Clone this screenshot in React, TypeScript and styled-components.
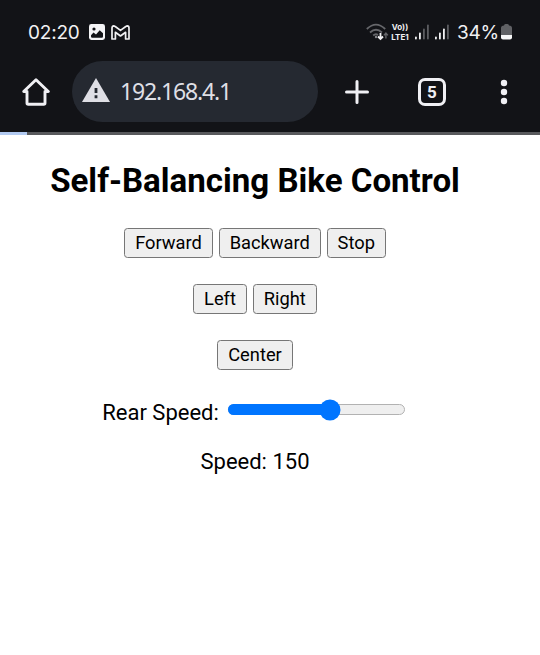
import React from "react";
import styled, { createGlobalStyle } from "styled-components";

const GlobalStyle = createGlobalStyle`
  * { box-sizing: border-box; }
  body { margin: 0; background: #fff; overflow: hidden; }
`;

const Screen = styled.div`
  width: 540px;
  height: 655px;
  display: flex;
  flex-direction: column;
  background: #fff;
  font-family: Roboto, sans-serif;
  color: #000;
`;

const StatusBar = styled.div`
  height: 61px;
  flex: none;
  display: flex;
  align-items: flex-start;
  justify-content: space-between;
  padding: 20px 28px 0 28px;
  background: #121317;
  color: #f1f1f3;
`;

const StatusGroup = styled.div<{ $gap: number }>`
  display: flex;
  align-items: center;
  height: 24px;
  gap: ${(p) => p.$gap}px;
  svg { display: block; flex: none; }
`;

const StatusText = styled.span<{ $width: number; $spacing: number }>`
  width: ${(p) => p.$width}px;
  font: 400 19px/24px Inter, sans-serif;
  letter-spacing: ${(p) => p.$spacing}px;
  white-space: nowrap;
  padding-top: 1px;
`;

const SignalPair = styled.div`
  display: flex;
  gap: 6px;
  margin-right: 7px;
`;

const Toolbar = styled.div`
  height: 71px;
  flex: none;
  display: flex;
  align-items: flex-start;
  padding-left: 22px;
  background: #121317;
  color: #f0f0f4;
`;

const IconButton = styled.button<{ $left?: number }>`
  display: flex;
  align-items: center;
  justify-content: center;
  width: 28px;
  height: 61px;
  margin: 0 0 0 ${(p) => p.$left ?? 0}px;
  padding: 0;
  border: 0;
  background: none;
  color: inherit;
  svg { display: block; flex: none; }
`;

const AddressBar = styled.div`
  display: flex;
  align-items: center;
  width: 246px;
  height: 61px;
  margin-left: 22px;
  padding-left: 10px;
  border-radius: 31px;
  background: #252931;
  svg { margin-bottom: 3px; }
`;

const Address = styled.span`
  margin: 0 0 2px 10px;
  font: 400 23px/30px "Noto Sans", sans-serif;
  letter-spacing: -1.15px;
  color: #dfdfe5;
`;

const TabCount = styled.span`
  display: flex;
  align-items: center;
  justify-content: center;
  flex: none;
  width: 28px;
  height: 28px;
  border: 3px solid #f0f0f4;
  border-radius: 7px;
  font: 700 17px/20px Roboto, sans-serif;
`;

const LoadTrack = styled.div`
  height: 3px;
  flex: none;
  background: #58595c;
`;

const LoadBar = styled.div`
  width: 27px;
  height: 3px;
  background: #b2caf1;
`;

const Page = styled.main`
  width: 510px;
  display: flex;
  flex-direction: column;
  align-items: center;
`;

const Title = styled.h1`
  margin: 26px 0 0;
  font: 700 33.1px/40px Roboto, sans-serif;
  white-space: nowrap;
`;

const ButtonRow = styled.div<{ $top: number }>`
  display: flex;
  gap: 5.5px;
  margin-top: ${(p) => p.$top}px;
`;

const ControlButton = styled.button<{ $width: number }>`
  width: ${(p) => p.$width}px;
  height: 30px;
  padding: 0;
  border: 1.4px solid #767676;
  border-radius: 3.5px;
  background: #efefef;
  color: #000;
  font: 400 18.3px/26px Roboto, sans-serif;
  white-space: nowrap;
`;

const SpeedRow = styled.div`
  display: flex;
  margin: 29px 0 0 -3px;
  font-size: 22px;
  line-height: 28px;
`;

const SpeedLabel = styled.label`
  width: 125.5px;
  white-space: nowrap;
`;

const SliderTrack = styled.div`
  position: relative;
  width: 177px;
  height: 11px;
  margin-top: 5px;
  border: 1px solid #b2b2b2;
  border-radius: 6px;
  background: #efefef;
`;

const SliderFill = styled.div`
  height: 11px;
  margin: -1px 0 0 -1px;
  border-radius: 6px 0 0 6px;
  background: #0075ff;
`;

const SliderThumb = styled.div`
  position: absolute;
  top: 50%;
  width: 21px;
  height: 21px;
  border-radius: 50%;
  background: #0075ff;
  transform: translate(-50%, -50%);
`;

const SpeedValue = styled.p`
  margin: 21px 0 0;
  font-size: 22px;
  line-height: 28px;
`;

const PictureIcon = () => (
  <svg width="16" height="16" viewBox="0 0 16 16">
    <rect width="16" height="16" rx="2.4" fill="#f4f4f6" />
    <circle cx="5" cy="5" r="1.6" fill="#121317" />
    <path d="M2 11.2 4.500 8.600l2.500 1.900 3.700-4.200L14 9.300v3.200q0 1.200-1.200 1.200H3.200Q2 13.700 2 12.500Z" fill="#121317" />
  </svg>
);

const MailIcon = () => (
  <svg width="19" height="15" viewBox="0 0 19 15" fill="none" stroke="#f1f1f3" strokeWidth="1.7" strokeLinejoin="round">
    <path d="M1 3.200Q1 .9 2.700.9l1.500.6L9.500 5.400 14.800 1.500 16.300.9Q18 .9 18 3.200V14h-3.400V7.300L9.500 11 4.400 7.300V14H1Z" />
  </svg>
);

const WifiIcon = () => (
  <svg width="23" height="18" viewBox="0 0 23 18" fill="none" strokeWidth="1.8">
    <path d="M.8 6Q10-2.800 19.200 6M4 9.500q6-5.500 12 0M7.200 12.500q2.400-2.200 4.800-.5" stroke="#66676b" />
    <circle cx="10" cy="14" r="1.2" fill="#85868a" />
    <path d="M14.500 10v6M12 13.500l2.500 2.500 2.500-2.500" stroke="#f1f1f3" />
    <path d="M19.900 15.500V10m-2 2.400 2-2.400 2 2.400" stroke="#65666a" strokeWidth="1.4" />
  </svg>
);

const LteBox = styled.div`
  width: 20px;
  height: 20px;
  margin-right: 4px;
  display: flex;
  flex-direction: column;
  align-items: center;
  font: 700 8px/10px Inter, sans-serif;
  white-space: nowrap;
`;

const SignalIcon = ({ active }: { active: number }) => (
  <svg width="14" height="16" viewBox="0 0 14 16">
    {[3, 7, 11, 15].map((height, i) => (
      <rect key={height} x={i * 4} y={15.5 - height} width="1.8" height={height} rx=".8" fill={i < active ? "#f1f1f3" : "#5c5d61"} />
    ))}
  </svg>
);

const BatteryIcon = () => (
  <svg width="11" height="16" viewBox="0 0 11 16">
    <path d="M3 1.500Q3 0 4.500 0h2Q8 0 8 1.500q3 0 3 2.500v7H0V4q0-2.500 3-2.500Z" fill="#606165" />
    <path d="M0 11h11v2.500q0 2-2 2H2q-2 0-2-2Z" fill="#f7f7f8" />
  </svg>
);

const HomeIcon = () => (
  <svg width="28" height="28" viewBox="0 0 28 28" fill="none" stroke="currentColor" strokeWidth="2.9" strokeLinejoin="round" strokeLinecap="round">
    <path d="M1.700 13.500 14 1.700l12.300 11.800H23V25q0 1.200-1.200 1.200H6.200Q5 26.200 5 25V13.500Z" />
  </svg>
);

const WarningIcon = () => (
  <svg width="28" height="24" viewBox="0 0 28 24">
    <path d="M14 0 28 24H0Z" fill="#dfdfe5" />
    <path d="M12.600 10h2.800v5h-2.800zM12.600 17.300h2.800v3h-2.800z" fill="#252931" />
  </svg>
);

const PlusIcon = () => (
  <svg width="24" height="24" viewBox="0 0 24 24" fill="none" stroke="currentColor" strokeWidth="3" strokeLinecap="round">
    <path d="M12 1.500v21M1.500 12h21" />
  </svg>
);

const MenuIcon = () => (
  <svg width="8" height="26" viewBox="0 0 8 26" fill="currentColor">
    <circle cx="4" cy="4" r="3.2" />
    <circle cx="4" cy="13" r="3.2" />
    <circle cx="4" cy="22" r="3.2" />
  </svg>
);

const SPEED = 150;
const MAX_SPEED = 255;
const TRACK = 177;
const THUMB = 21;

export default function App() {
  const thumbX = THUMB / 2 + (SPEED / MAX_SPEED) * (TRACK - THUMB) - 1;
  return (
    <>
      <GlobalStyle />
      <Screen>
        <StatusBar>
          <StatusGroup $gap={6}>
            <StatusText $width={55} $spacing={-0.2}>02:20</StatusText>
            <PictureIcon />
            <MailIcon />
          </StatusGroup>
          <StatusGroup $gap={1}>
            <WifiIcon />
            <LteBox>
              <span>Vo))</span>
              <span>LTE1</span>
            </LteBox>
            <SignalPair>
              <SignalIcon active={2} />
              <SignalIcon active={3} />
            </SignalPair>
            <StatusText $width={43} $spacing={-0.2}>34%</StatusText>
            <BatteryIcon />
          </StatusGroup>
        </StatusBar>
        <Toolbar>
          <IconButton aria-label="Home"><HomeIcon /></IconButton>
          <AddressBar>
            <WarningIcon />
            <Address>192.168.4.1</Address>
          </AddressBar>
          <IconButton $left={25} aria-label="New tab"><PlusIcon /></IconButton>
          <IconButton $left={47} aria-label="Tabs"><TabCount>5</TabCount></IconButton>
          <IconButton $left={44} aria-label="Menu"><MenuIcon /></IconButton>
        </Toolbar>
        <LoadTrack><LoadBar /></LoadTrack>
        <Page>
          <Title>Self-Balancing Bike Control</Title>
          <ButtonRow $top={27}>
            <ControlButton $width={89}>Forward</ControlButton>
            <ControlButton $width={102.5}>Backward</ControlButton>
            <ControlButton $width={59.5}>Stop</ControlButton>
          </ButtonRow>
          <ButtonRow $top={26}>
            <ControlButton $width={54}>Left</ControlButton>
            <ControlButton $width={64.5}>Right</ControlButton>
          </ButtonRow>
          <ButtonRow $top={26}>
            <ControlButton $width={76}>Center</ControlButton>
          </ButtonRow>
          <SpeedRow>
            <SpeedLabel>Rear Speed:</SpeedLabel>
            <SliderTrack role="slider" aria-valuemin={0} aria-valuemax={MAX_SPEED} aria-valuenow={SPEED}>
              <SliderFill style={{ width: thumbX }} />
              <SliderThumb style={{ left: thumbX }} />
            </SliderTrack>
          </SpeedRow>
          <SpeedValue>Speed: {SPEED}</SpeedValue>
        </Page>
      </Screen>
    </>
  );
}
